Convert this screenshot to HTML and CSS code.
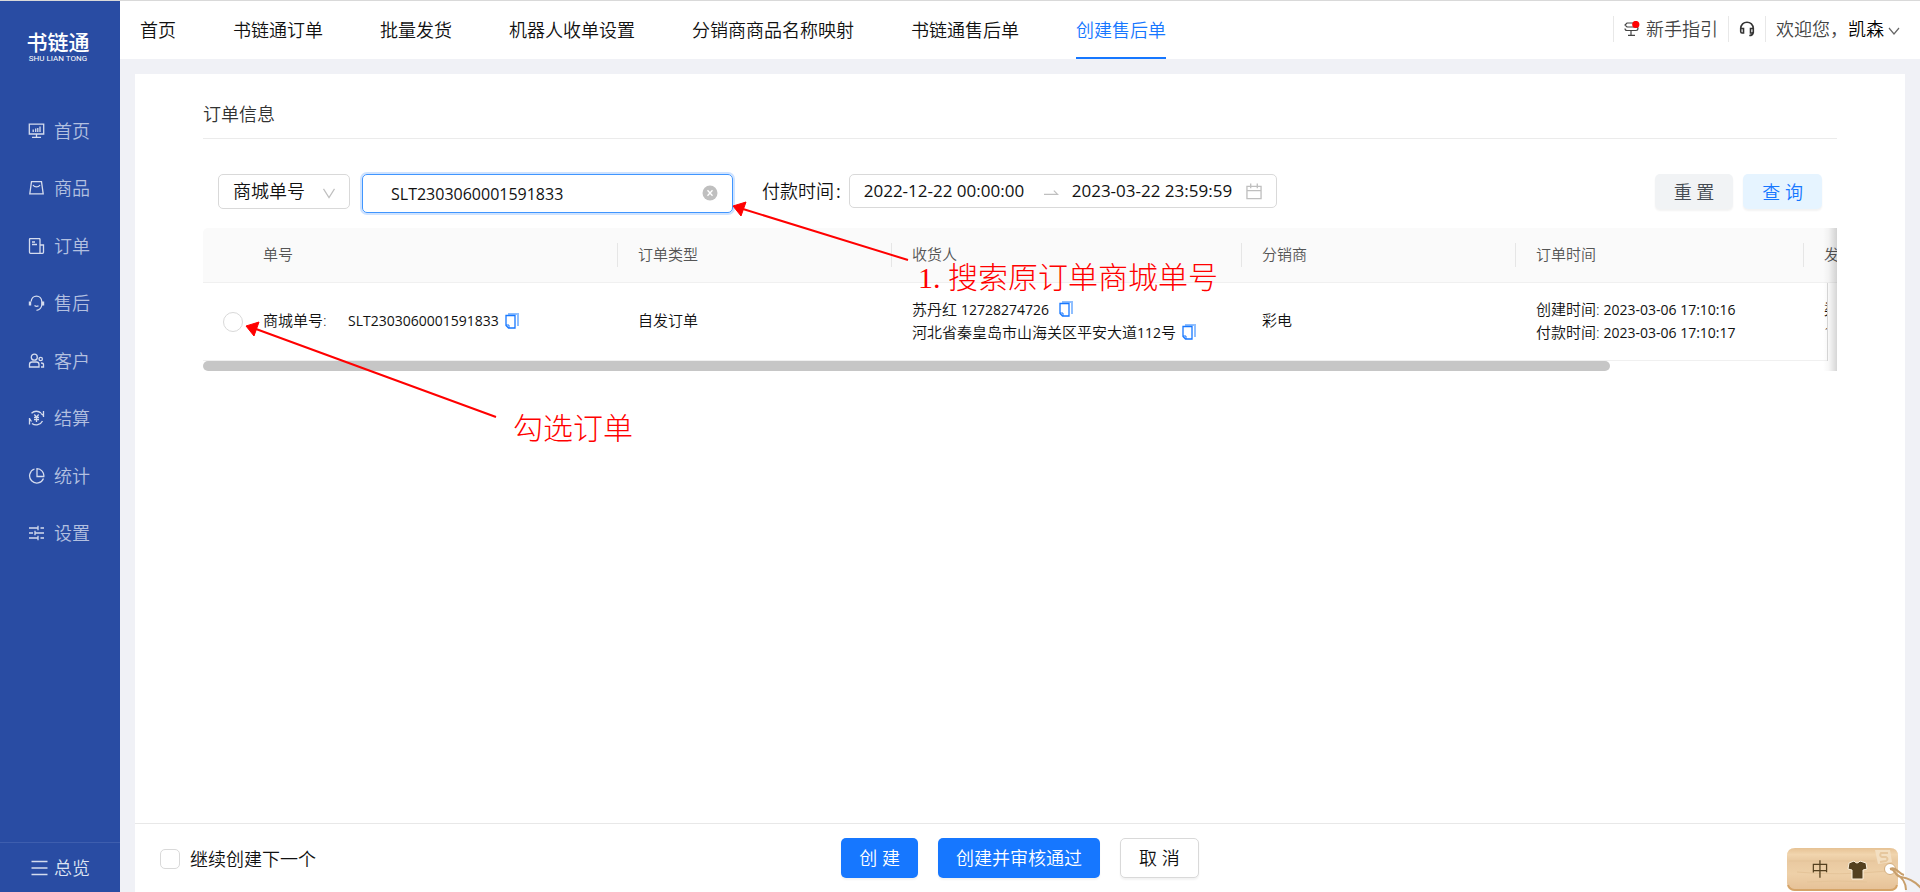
FILE: index.html
```html
<!DOCTYPE html>
<html lang="zh-CN">
<head>
<meta charset="utf-8">
<title>书链通 - 创建售后单</title>
<link rel="stylesheet" href="styles.css">
</head>
<body>
<svg class="defs" aria-hidden="true">
  <symbol id="copy" viewBox="0 0 14 16">
    <path d="M3 1h10v12" fill="none" stroke="#8fbfff" stroke-width="2"/>
    <path d="M1 2.5h9v12.500h-6.500L1 12.500z" fill="#fff" stroke="#1677ff" stroke-width="1.300"/>
    <path d="M1 12h3V15" fill="none" stroke="#1677ff" stroke-width="1"/>
  </symbol>
</svg>
<div class="app">
  <aside class="sidebar">
    <div class="logo">
      <span class="logo-name">书链通</span>
      <span class="logo-sub">SHU LIAN TONG</span>
    </div>
    <nav class="menu">
      <a href="#"><svg viewBox="0 0 16 16"><path d="M.8 1.200h14.400v9.800H.8zM8 11v3M3.500 14.300h9M4.700 9V6.500M7.200 9V5.500M9.300 9V5M11.500 9V3.500"/></svg>首页</a>
      <a href="#"><svg viewBox="0 0 16 16"><path d="M3 1.700h10l1.700 12.100H1.300zM4.500 5c1.500 2.600 5.500 2.600 7 0"/></svg>商品</a>
      <a href="#"><svg viewBox="0 0 16 16"><path d="M11.500 15.300H2q-1 0-1-1V1.500q0-1 1-1h8.500q1 0 1 1zM11.500 7H15v7.300q0 1-1 1h-2.500M3.500 4h3M3.500 6.500h5"/></svg>订单</a>
      <a href="#"><svg viewBox="0 0 16 16"><path d="M2.700 6.500C3 -.8 13 -.8 13.300 6.500v3.500c-.5 3.500-2.500 5-5.300 5.300M6 10.500q2 1.500 4 .3"/><path d="M1.500 6.500v4M14.500 6.500v4" stroke-width="2.400"/></svg>售后</a>
      <a href="#"><svg viewBox="0 0 16 16"><circle cx="5.800" cy="4.200" r="3"/><path d="M1 14V11.500q0-2.500 2.500-2.500h4.600q2.400 0 2.400 2.500V14zM12.500 14H15v-2.500q0-1.500-2.500-1.500"/><circle cx="12.200" cy="6" r="1.700"/></svg>客户</a>
      <a href="#"><svg viewBox="0 0 16 16"><path d="M3 3.200A7 7 0 0 1 12.500 3M15 1v6M3.500 13.500A7 7 0 0 0 14 11M1 8v6.500M1 8.500l2 3M15 5.500l-2.500-2M5.800 4.500L8 7l2.200-2.500M8 7v5M5.500 7.500h5M5.500 9.700h5"/></svg>结算</a>
      <a href="#"><svg viewBox="0 0 16 16"><path d="M6 1A7.200 7.200 0 1 0 15 10.500M8.500 .7v7.800h6.800A7 7 0 0 0 8.500 .7z"/></svg>统计</a>
      <a href="#"><svg viewBox="0 0 16 16"><path d="M.5 3h9M12 3h3.500M9.500 .8v4.400M.5 8h4M6.500 8h9M6.500 5.800v4.400M.5 13h9M12 13h3.500M9.500 10.800v4.400"/></svg>设置</a>
    </nav>
    <a href="#" class="overview"><svg viewBox="0 0 16 16"><path d="M0 1.500h16M0 8h16M0 14.500h16"/></svg>总览</a>
  </aside>
  <div class="content">
    <header class="topbar">
      <nav class="tabs">
        <a href="#">首页</a>
        <a href="#">书链通订单</a>
        <a href="#">批量发货</a>
        <a href="#">机器人收单设置</a>
        <a href="#">分销商商品名称映射</a>
        <a href="#">书链通售后单</a>
        <a href="#" class="active">创建售后单</a>
      </nav>
      <div class="tools">
        <a href="#" class="guide"><svg viewBox="0 0 16 16"><path d="M10 2H3L1 4l2 2h9q2 0 2 1.700T12 9.500H3Q1 9.500 1 7.500M7 9.500V14M4 14.300h7" fill="none" stroke="#444" stroke-width="1.200"/><circle cx="11.800" cy="3.500" r="3.600" fill="#f00"/></svg>新手指引</a>
        <button type="button" class="service" aria-label="客服"><svg viewBox="0 0 16 16"><path d="M1.700 8C1.500-1 14.500-1 14.300 8v3.500q-.5 3-4 3M1.700 7.500h2.800v4.500H3q-1.300 0-1.300-1.500zM14.300 7.500h-2.800v4.500H13q1.300 0 1.300-1.500z" fill="none" stroke="#333" stroke-width="1.600"/></svg></button>
        <button type="button" class="user">欢迎您，<strong>凯森</strong><svg viewBox="0 0 12 8"><path d="M1 1l5 6 5-6" fill="none" stroke="#666" stroke-width="1.200"/></svg></button>
      </div>
    </header>
    <main class="panel">
      <section class="order">
        <h1>订单信息</h1>
        <form class="filters">
          <div class="select-box">
            <select aria-label="单号类型"><option>商城单号</option></select>
            <svg viewBox="0 0 14 12"><path d="M1 1l6 9.500L13 1" fill="none" stroke="#bfbfbf" stroke-width="1.300"/></svg>
          </div>
          <div class="search-box">
            <input type="text" aria-label="商城单号" value="SLT2303060001591833">
            <button type="button" aria-label="清除"><svg viewBox="0 0 16 16"><circle cx="8" cy="8" r="7.500" fill="#bfbfbf"/><path d="M5.500 5.200l5 5.600M10.500 5.200l-5 5.600" stroke="#fff" stroke-width="1.300"/></svg></button>
          </div>
          <label for="from">付款时间<span>:</span></label>
          <div class="range">
            <input id="from" type="text" value="2022-12-22 00:00:00">
            <svg class="to" viewBox="0 0 16 8"><path d="M0 6.500h14.500L10.500 2.500" fill="none" stroke="#bfbfbf" stroke-width="1.300"/></svg>
            <input type="text" aria-label="结束时间" value="2023-03-22 23:59:59">
            <svg class="cal" viewBox="0 0 17 17"><path d="M1 3h15v13H1zM1 7.500h15M5 0v5M12 0v5" fill="none" stroke="#bfbfbf" stroke-width="1.400"/></svg>
          </div>
          <div class="actions">
            <button type="reset" class="btn soft">重 置</button>
            <button type="button" class="btn tint">查 询</button>
          </div>
        </form>
        <div class="grid">
          <div class="grid-head">
            <table>
              <colgroup><col class="c0"><col class="c1"><col class="c2"><col class="c3"><col class="c2"><col class="c5"><col class="c6"></colgroup>
              <thead><tr><td></td><th>单号</th><th>订单类型</th><th>收货人</th><th>分销商</th><th>订单时间</th><th>发</th></tr></thead>
            </table>
          </div>
          <div class="grid-body">
            <table>
              <colgroup><col class="c0"><col class="c1"><col class="c2"><col class="c3"><col class="c2"><col class="c5"><col class="c6"></colgroup>
              <tbody><tr>
                <td class="pick"><input type="radio" name="order" aria-label="选择订单"></td>
                <td><div class="line"><span class="key">商城单号:</span><span class="num">SLT2303060001591833</span><svg class="copy"><use href="#copy"/></svg></div></td>
                <td>自发订单</td>
                <td>
                  <div class="line">苏丹红&nbsp;<span class="num">12728274726</span><svg class="copy wide"><use href="#copy"/></svg></div>
                  <div class="line">河北省秦皇岛市山海关区平安大道<span class="num">112</span>号<svg class="copy"><use href="#copy"/></svg></div>
                </td>
                <td>彩电</td>
                <td>
                  <div class="line">创建时间:&nbsp;<span class="num">2023-03-06 17:10:16</span></div>
                  <div class="line">付款时间:&nbsp;<span class="num">2023-03-06 17:10:17</span></div>
                </td>
                <td><div class="line">渠</div><div class="line">1</div></td>
              </tr></tbody>
            </table>
          </div>
          <div class="track"><div class="thumb"></div></div>
        </div>
      </section>
      <footer class="footer">
        <label class="next"><input type="checkbox">继续创建下一个</label>
        <div class="footer-actions">
          <button type="button" class="btn primary">创 建</button>
          <button type="button" class="btn primary">创建并审核通过</button>
          <button type="button" class="btn plain">取 消</button>
        </div>
      </footer>
    </main>
  </div>
</div>

<svg class="arrows" aria-hidden="true">
  <g stroke="#f00" stroke-width="2" fill="#f00">
    <path d="M908 260L743 209M496 417L256 329"/>
    <path d="M733 206l13-4-5 14zM246 326l13-4-5 14z" stroke-width="1"/>
  </g>
</svg>
<p class="note note-search"><span>1.</span>搜索原订单商城单号</p>
<p class="note note-pick">勾选订单</p>

<div class="ime">
  <svg viewBox="0 0 134 44" aria-hidden="true">
    <defs><linearGradient id="wood" x1="0" y1="0" x2="0" y2="1"><stop offset="0" stop-color="#e6c294"/><stop offset=".15" stop-color="#f1d5ae"/><stop offset=".3" stop-color="#e9c9a0"/><stop offset=".6" stop-color="#eed0a8"/><stop offset="1" stop-color="#e5c096"/></linearGradient></defs>
    <path d="M8 0h95q8 0 8 8v19q0 3 0 6v3q-2 7-8 7H8q-8 0-8-8V8q0-8 8-8z" fill="url(#wood)"/>
    <path d="M1 37q2 5 7 5h95q6 0 7-5" fill="none" stroke="#d5a468" stroke-width="2"/>
    <path d="M2 13h86M10 24q40 4 90-1M20 34q30-2 60 0" fill="none" stroke="#e5c499" stroke-width="1"/>
    <path d="M88 2h15l2 12-14 2z" fill="#f3dfc2"/>
    <path d="M101 5h-7q-2 3 1 4h4q3 2 0 4l-6 1" fill="none" stroke="#e6c79e" stroke-width="2"/>
    <path d="M62 15l5-2q3 4 6 0l6 2 1 6-4 1v9H65v-9l-4-1z" fill="#54401f" stroke="#fff3df" stroke-width="1"/>
    <circle cx="103" cy="21" r="5.500" fill="#fff" stroke="#d3ad7d" stroke-width="1"/>
    <path d="M103 21c6 0 4 7 11 8s13 3 20 11M108 25c7 4 11 9 11 17M103 21c6-3 9 5 14 6" fill="none" stroke="#c89f6c" stroke-width="2"/>
  </svg>
  <span>中</span>
</div>
</body>
</html>
```
FILE: styles.css
```css
* { box-sizing: border-box; }

body {
  margin: 0;
  font: 350 18px/26px "Open Sans", "Noto Sans CJK SC", sans-serif;
  color: #111;
  background: #f0f1f6;
}

a { color: inherit; text-decoration: none; }
button, input, select { font: inherit; color: inherit; margin: 0; }
button { cursor: pointer; }
svg { display: block; flex: none; }
.defs { position: absolute; width: 0; height: 0; }

.app { display: flex; min-height: 100vh; border-top: 1px solid #d9d9d9; }

/* Sidebar */
.sidebar {
  flex: none;
  display: flex;
  flex-direction: column;
  width: 120px;
  background: #294ca3;
  color: #b3c0e0;
}
.logo {
  display: flex;
  flex-direction: column;
  align-items: center;
  padding: 29px 4px 0 0;
  color: #fff;
}
.logo-name { font-size: 21px; line-height: 24px; font-weight: 500; }
.logo-sub { font: 400 8px/10px "Roboto", sans-serif; }
.menu {
  display: grid;
  grid-auto-rows: 1fr;
  height: 460px;
  margin-top: 38px;
}
.menu a, .overview {
  display: flex;
  align-items: center;
  gap: 9px;
  padding-left: 28px;
}
.menu svg, .overview svg {
  width: 17px;
  height: 16px;
  fill: none;
  stroke: #d5dcee;
  stroke-width: 1.3;
}
.overview {
  height: 50px;
  margin-top: auto;
  padding-left: 31px;
  gap: 6px;
  border-top: 1px solid #3e5eae;
  color: #dde3f2;
}

/* Top bar */
.content { flex: 1; min-width: 0; display: flex; flex-direction: column; }
.topbar {
  display: flex;
  justify-content: space-between;
  height: 58px;
  padding: 0 20px;
  background: #fff;
}
.tabs { display: flex; gap: 57px; }
.tabs a { padding-top: 2px; line-height: 54px; white-space: nowrap; }
.tabs .active { color: #1677ff; border-bottom: 2px solid #1677ff; }
.tools { display: flex; align-items: center; padding-bottom: 2px; color: #444; }
.tools > * {
  display: flex;
  align-items: center;
  height: 26px;
  padding: 0 10px;
  border: 0;
  border-left: 1px solid #e8e8e8;
  background: none;
  white-space: nowrap;
}
.guide { gap: 6px; }
.guide svg, .service svg { width: 16px; height: 16px; }
.tools .user { padding-right: 0; }
.user strong { font-weight: inherit; color: #000; }
.user svg { width: 12px; height: 8px; margin-left: 4px; margin-top: 4px; }

/* Panel */
.panel {
  flex: 1;
  display: flex;
  flex-direction: column;
  margin: 15px 15px 0;
  background: #fff;
}
.order { flex: 1; padding: 27px 68px 0; }
h1 {
  margin: 0;
  padding-bottom: 11px;
  border-bottom: 1px solid #ebebeb;
  font-size: 18px;
  font-weight: inherit;
  color: #333;
}

.filters { display: flex; align-items: flex-start; padding: 35px 15px 15px; }
.select-box { position: relative; width: 132px; }
.select-box select {
  appearance: none;
  width: 100%;
  height: 35px;
  padding: 0 14px 2px;
  border: 1px solid #d9d9d9;
  border-radius: 5px;
  background: #fff;
}
.select-box svg {
  position: absolute;
  right: 14px;
  top: 14px;
  width: 14px;
  height: 11px;
  pointer-events: none;
}
.search-box {
  display: flex;
  align-items: center;
  width: 371px;
  height: 39px;
  margin-left: 12px;
  padding: 0 14px 2px 28px;
  border: 1px solid #4096ff;
  border-radius: 5px;
  box-shadow: 0 0 0 2px #cfe3ff;
}
.search-box input {
  flex: 1;
  min-width: 0;
  padding: 3px 0 0;
  border: 0;
  outline: 0;
  background: none;
  font-size: 16px;
  font-weight: 400;
}
.search-box button { padding: 0; border: 0; background: none; }
.search-box svg { width: 16px; height: 16px; }
.filters label { margin-left: 29px; line-height: 34px; white-space: nowrap; }
.filters label span { margin-left: 2px; font-weight: 400; }
.range {
  display: flex;
  align-items: center;
  width: 428px;
  height: 34px;
  margin-left: 8px;
  padding: 0 14px;
  border: 1px solid #d9d9d9;
  border-radius: 5px;
}
.range input {
  width: 162px;
  padding: 0;
  border: 0;
  outline: 0;
  background: none;
  font-size: 17px;
  font-weight: 400;
}
.range .to { width: 15px; height: 8px; margin: 2px 13px 0 18px; }
.range .cal { width: 16px; height: 17px; margin-left: auto; }
.actions { display: flex; gap: 10px; margin-left: auto; }

.btn {
  height: 40px;
  padding: 0 18px;
  border: 0;
  border-radius: 5px;
  box-shadow: 0 2px 2px #f3f3f3;
  white-space: nowrap;
}
.actions .btn { height: 35px; padding: 0 19px; }
.soft { background: #f1f3f5; color: #444a52; }
.tint { background: #e6f4ff; color: #1677ff; }
.primary { background: #1677ff; color: #fff; }
.plain { border: 1px solid #d9d9d9; background: #fff; }

/* Order table */
.grid { position: relative; overflow: hidden; font-size: 15px; line-height: 23px; }
.grid::after {
  content: "";
  position: absolute;
  top: 0;
  right: 0;
  width: 14px;
  height: 100%;
  background: linear-gradient(to right, rgba(0, 0, 0, 0), rgba(0, 0, 0, .03) 40%, rgba(0, 0, 0, .16));
}
table { width: 1893px; table-layout: fixed; border-collapse: separate; border-spacing: 0; }
.c0 { width: 40px; }
.c1 { width: 375px; }
.c2 { width: 274px; }
.c3 { width: 350px; }
.c5 { width: 288px; }
.c6 { width: 292px; }
.grid-head { overflow: hidden; border-radius: 5px 0 0 0; background: #fafafa; }
.grid-head th, .grid-head td {
  position: relative;
  height: 55px;
  padding: 0 20px 2px;
  border-bottom: 1px solid #f0f0f0;
  font-weight: inherit;
  text-align: left;
  color: #555;
}
.grid-head th + th::before {
  content: "";
  position: absolute;
  left: -1px;
  top: 15px;
  width: 1px;
  height: 24px;
  background: #e6e6e6;
}
.grid-body {
  overflow: hidden;
  margin-right: 9px;
  border-right: 1px solid #d9d9d9;
}
.grid-body td { height: 78px; padding: 0 20px 2px; border-bottom: 1px solid #f0f0f0; }
.grid-body .pick { padding: 0 0 0 20px; }
.line { display: flex; align-items: center; white-space: nowrap; }
.key { width: 85px; }
.num { font-size: 14px; font-weight: 400; }
.copy { width: 14px; height: 16px; margin-left: 6px; }
.wide { margin-left: 10px; }
input[type="radio"], input[type="checkbox"] {
  appearance: none;
  display: block;
  flex: none;
  width: 20px;
  height: 20px;
  border: 1px solid #d9d9d9;
  border-radius: 50%;
  background: #fff;
}
input[type="checkbox"] { border-radius: 5px; }
.track { height: 10px; }
.thumb { width: 86.1%; height: 10px; border-radius: 5px; background: #c6c6c6; }

/* Footer */
.footer {
  display: grid;
  grid-template-columns: 1fr auto 1fr;
  align-items: center;
  height: 69px;
  padding: 0 25px;
  border-top: 1px solid #e8e8e8;
}
.next { display: flex; align-items: center; gap: 10px; padding-top: 2px; }
.footer-actions { display: flex; gap: 20px; }

/* Annotations over the page */
.arrows {
  position: absolute;
  left: 0;
  top: 0;
  width: 920px;
  height: 430px;
  pointer-events: none;
}
.note {
  position: absolute;
  display: flex;
  margin: 0;
  font: 300 30px/34px "Liberation Serif", "Noto Sans CJK SC", serif;
  color: #f00;
  white-space: nowrap;
}
.note span { width: 30px; }
.note-search { left: 918px; top: 261px; }
.note-pick { left: 513px; top: 412px; }

/* Input method badge */
.ime { position: fixed; right: 0; bottom: 0; width: 133px; height: 44px; overflow: hidden; }
.ime svg { width: 134px; height: 44px; }
.ime span { position: absolute; left: 24px; top: 8px; color: #54401f; }
```
